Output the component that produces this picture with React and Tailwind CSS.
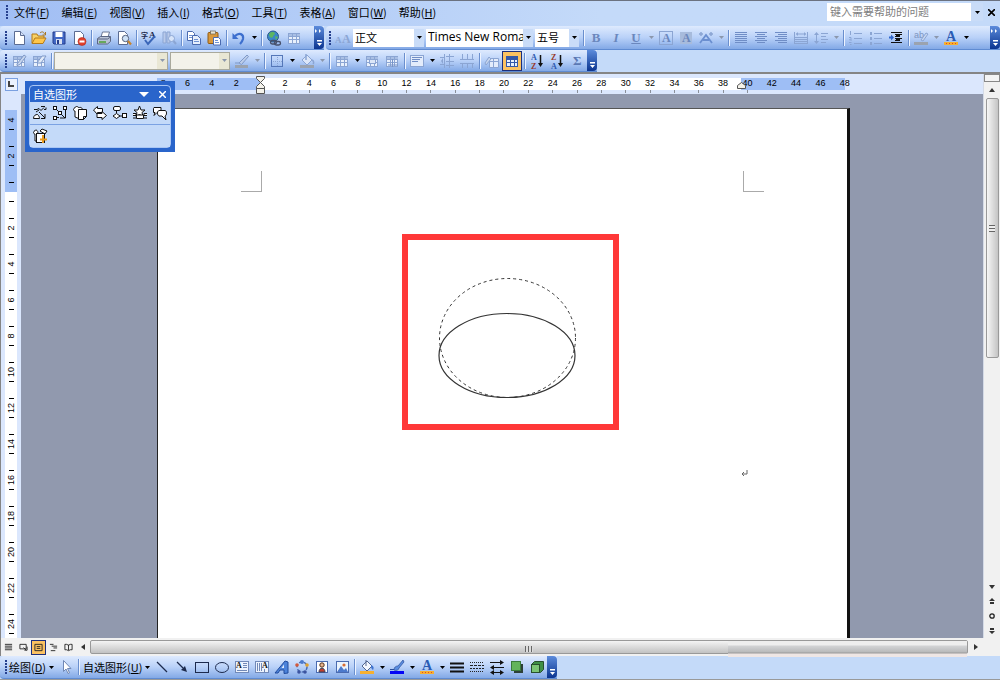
import clsx from "clsx";

const menus = [
  ["文件", "F"], ["编辑", "E"], ["视图", "V"], ["插入", "I"], ["格式", "O"],
  ["工具", "T"], ["表格", "A"], ["窗口", "W"], ["帮助", "H"],
];

const OFF = "#8ba5d3";
const INK = "#1c2a4d";

// small serif letter used inside icons
const Letter = ({ x, y, size = 11, fill = OFF, children }) => (
  <text x={x} y={y} fontSize={size} fontWeight="bold" fontFamily="Liberation Serif, serif" fill={fill}>{children}</text>
);

const lines = (list, stroke = OFF) => (
  <g stroke={stroke} shapeRendering="crispEdges">
    {list.map(([x1, x2, y], i) => <line key={i} x1={x1} x2={x2} y1={y + 0.5} y2={y + 0.5} />)}
  </g>
);

const grid = (stroke, head) => (
  <g shapeRendering="crispEdges">
    <rect x="2.5" y="3.5" width="11" height="10" fill="#e8f0fc" stroke={stroke} />
    <rect x="3" y="4" width="11" height="2" fill={head} />
    <path d="M3 6.5h11M3 9.5h11M6.5 4v10M10.5 4v10" stroke={stroke} />
  </g>
);

const icons = {
  new: <><path d="M3.5 1.5h6l4 4v9h-10z" fill="#fff" stroke="#5b6c93" /><path d="M9.5 1.5v4h4" fill="#d6e2f7" stroke="#5b6c93" /></>,
  open: <><path d="M1 13V4h5l1 2h6v2" fill="#f7d268" stroke="#b57b19" /><path d="M1 13.5L4 8h11l-3 5.5z" fill="#ffc64a" stroke="#b57b19" /><path d="M9 3c2-2 4-1 4.5 1M14.5 2v3h-3" fill="none" stroke="#a8761f" /></>,
  save: <><path d="M2 2h12v12H3l-1-1z" fill="#4268c5" stroke="#253d8b" /><rect x="4.5" y="2" width="7" height="5" fill="#fff" /><rect x="5" y="9" width="6" height="5" fill="#d7dff0" /><rect x="6" y="10" width="2" height="4" fill="#253d8b" /></>,
  perm: <><path d="M3.5 1.5h6l3 3v10h-9z" fill="#fff" stroke="#5b6c93" /><circle cx="11" cy="11.5" r="4" fill="#e2402c" stroke="#b32617" strokeWidth=".6" /><rect x="8.5" y="10.5" width="5" height="2" fill="#fff" /></>,
  print: <><path d="M5 7l1.5-5h7L12 7" fill="#fff" stroke="#6b7895" /><path d="M1.5 8.5l3-2h10v5l-3 2.5h-10z" fill="#b9c3d6" stroke="#5b6784" /><path d="M2 9h9.5l3-2" fill="none" stroke="#5b6784" /><rect x="3" y="11" width="7" height="2" fill="#67a85c" /></>,
  preview: <><path d="M2.5 1.5h6l3 3v10h-9z" fill="#fff" stroke="#5b6c93" /><circle cx="9.5" cy="8.5" r="3.2" fill="#cfe2f7" stroke="#56627e" /><path d="M12 11l3 3.5" stroke="#c8842b" strokeWidth="2.2" /></>,
  spell: <><text x="0" y="8" fontSize="7" fontWeight="bold" fontFamily="Noto Sans CJK SC, sans-serif" fill={INK}>字</text><Letter x={8} y={8} size={9} fill={INK}>A</Letter><path d="M4 10l3 4 7-8" fill="none" stroke="#3a66b8" strokeWidth="2" /></>,
  research: <><path d="M2 2h3v11H2zM6 2h3v11H6z" fill="#b9caea" stroke={OFF} /><circle cx="10.5" cy="8.5" r="3" fill="#d7e4f9" stroke={OFF} /><path d="M12.5 11l2.5 3" stroke={OFF} strokeWidth="2" /></>,
  copy: <><path d="M1.5 1.5h5l2 2v7h-7z" fill="#fff" stroke="#4a6bb0" /><path d="M6.5 5.5h5l3 3v6h-8z" fill="#e7effc" stroke="#4a6bb0" /><path d="M8 9.5h4M8 11.5h5M3 5.5h3M3 7.5h3" stroke="#6f92d3" /></>,
  paste: <><rect x="2" y="2.5" width="10" height="11" rx="1" fill="#d9983a" stroke="#905a12" /><rect x="4.5" y="1" width="5" height="3" fill="#e9e3d2" stroke="#6d6452" strokeWidth=".7" /><path d="M7.5 7.5h5l2 2v5.5h-7z" fill="#fff" stroke="#4a6bb0" /><path d="M9 10.5h3M9 12.5h4" stroke="#6f92d3" /></>,
  undo: <><path d="M4 6c4-4 9-2 8 3-.5 2-2 4-3 5" fill="none" stroke="#3d6fce" strokeWidth="2.2" /><path d="M1.5 3v6h6z" fill="#3d6fce" /></>,
  link: <><circle cx="7" cy="6.5" r="5.5" fill="#3a86c9" stroke="#2b5a8a" /><path d="M3 4c2-3 5-2 6-1 0 2-2 2-2 4-2 2-4 0-4-3zM9 6l3 1-2 3z" fill="#5cb562" /><g fill="none" stroke="#46506a" strokeWidth="1.4"><rect x="4.5" y="10.5" width="6" height="3.5" rx="1.7" /><rect x="8.5" y="11.5" width="6" height="3.5" rx="1.7" /></g></>,
  table: grid(OFF, "#a9bfe4"),
  tableOn: grid("#3558a8", "#3558a8"),
  styles: <><Letter x={0} y={13} size={9}>A</Letter><Letter x={7} y={13} size={12}>A</Letter></>,
  boxA: <><rect x="1.5" y="1.5" width="13" height="13" fill="none" stroke={OFF} /><Letter x={4} y={12} size={12} fill="#6b87bd">A</Letter></>,
  shadeA: <><rect x="2" y="2" width="12" height="12" fill="#a7bbdc" /><Letter x={4} y={12} size={12} fill="#6b87bd">A</Letter></>,
  scaleA: <><path d="M1 4h4M3 2v4M11 4h4M13 2v4" stroke={OFF} strokeWidth="1.5" /><path d="M2 13l6-8 6 8M5 10h6" fill="none" stroke="#6b8fd0" strokeWidth="1.8" /></>,
  justify: lines([[2, 14, 2], [2, 14, 4], [2, 14, 6], [2, 14, 8], [2, 14, 10], [2, 14, 12]], "#6f8dc6"),
  center: lines([[2, 14, 2], [4, 12, 4], [2, 14, 6], [4, 12, 8], [2, 14, 10], [4, 12, 12]], "#6f8dc6"),
  right: lines([[2, 14, 2], [5, 14, 4], [2, 14, 6], [5, 14, 8], [2, 14, 10], [5, 14, 12]], "#6f8dc6"),
  spread: <><path d="M1.5 2v12M14.5 2v12M3 4h10" stroke={OFF} /><path d="M3 4l2-2v4zM13 4l-2-2v4z" fill={OFF} />{lines([[2, 14, 7], [2, 14, 9], [2, 14, 11], [2, 14, 13]])}</>,
  spacing: <><path d="M3.5 3v10" stroke={OFF} /><path d="M1 5l2.5-3L6 5zM1 11l2.5 3L6 11z" fill={OFF} />{lines([[8, 15, 3], [8, 13, 6], [8, 15, 9], [8, 13, 12]])}</>,
  numbers: <>{lines([[6, 14, 3], [6, 14, 8], [6, 14, 13]])}<g stroke={OFF}><path d="M2.5 1v4M1 7.5h2v1L1.5 10H4M1 12.5h2.5M2 14.5h1.5" fill="none" /></g></>,
  bullets: <>{lines([[6, 14, 3], [6, 14, 8], [6, 14, 13]])}<path d="M2 2h2v3H2zM2 7h2v3H2zM2 12h2v3H2z" fill={OFF} /></>,
  indent: <>{lines([[3, 14, 2], [7, 14, 4], [7, 12, 6], [7, 14, 8], [7, 12, 10], [3, 14, 12]], "#111")}{lines([[8, 12, 5], [8, 12, 9]], "#111")}<path d="M1 7.5h3" stroke="#2f66cc" strokeWidth="2" /><path d="M3 4.5l3 3-3 3z" fill="#2f66cc" /></>,
  highlight: <><text x="1" y="8" fontSize="9" fontFamily="Liberation Sans, sans-serif" fill="#7d94bf">ab</text><path d="M8 10l5-7 2 1-5 7z" fill="#c7d6ee" stroke={OFF} /><rect x="1" y="12" width="14" height="3" fill="#9ba3af" /></>,
  fontColor: <><Letter x={3} y={11} size={14} fill="#2a5bb4">A</Letter><rect x="1" y="12" width="14" height="3" fill="#f6b030" /><path d="M3 13.5h10" stroke="#e2452b" strokeDasharray="1 2" /></>,
  draw: <>{grid(OFF, "#a9bfe4")}<path d="M6 11l7-9 2 1.5-6 8-3 1z" fill="#c6d5ee" stroke="#7f99c8" /></>,
  erase: <>{grid(OFF, "#a9bfe4")}<path d="M6 10l5-7h4l-5 7z" fill="#e2ebf9" stroke="#7f99c8" /></>,
  penOff: <><path d="M5 10l8-8 1.5 1.5-7 8z" fill="#bccde9" stroke="#7f99c8" /><path d="M1 10h4" stroke="#7f99c8" /><rect x="1" y="12" width="13" height="3" fill="#9ba3af" /></>,
  border: <g shapeRendering="crispEdges"><rect x="2.5" y="2.5" width="11" height="11" fill="none" stroke="#5577b8" /><path d="M8.5 4v9M4 8.5h9" stroke={OFF} strokeDasharray="1 1" /></g>,
  fillOff: <><path d="M3 7l5-5 5 5-5 5z" fill="#dbe6f8" stroke={OFF} /><path d="M7 7V1M13 7c2 1 2 3 1 4" fill="none" stroke={OFF} strokeWidth="1.5" /><rect x="1" y="12" width="14" height="3" fill="#9ba3af" /></>,
  merge: <>{grid(OFF, "#a9bfe4")}<rect x="5.5" y="6.5" width="6" height="4" fill="#dbe6f8" stroke={OFF} /></>,
  split: <>{grid(OFF, "#a9bfe4")}<path d="M8.5 6v8M4 12h10" stroke="#7894c8" /></>,
  align: <><rect x="1.5" y="2.5" width="13" height="11" fill="#e3ecfb" stroke={OFF} />{lines([[3, 13, 4], [3, 11, 6], [3, 9, 8]], "#6f8dc6")}</>,
  rows: <><path d="M5.5 1v14M10.5 1v14M1 4.5h4M1 11.5h4M7 3.5h8M7 8.5h8M7 12.5h8" stroke={OFF} shapeRendering="crispEdges" /><path d="M2 8l2-3v6z" fill={OFF} /></>,
  cols: <path d="M1 6.5h14M1 10.5h14M3.5 1v5M8.5 1v5M13.5 1v5M3.5 10v5M8.5 10v5M13.5 10v5" stroke={OFF} shapeRendering="crispEdges" />,
  autoformat: <><path d="M5.5 5.5h9v9h-9zM5.5 8.5h9M9.5 5v9" fill="#e3ecfb" stroke={OFF} /><path d="M1 10l4-6 2 2-5 6z" fill="#c6d5ee" stroke={OFF} /></>,
  sortAZ: <><Letter x={2} y={7} size={8} fill="#2e57ae">A</Letter><Letter x={2} y={16} size={8} fill="#983a2b">Z</Letter><path d="M11.5 2v9" stroke="#111" strokeWidth="1.5" /><path d="M9 10h5l-2.5 4z" fill="#111" /></>,
  sortZA: <><Letter x={2} y={7} size={8} fill="#983a2b">Z</Letter><Letter x={2} y={16} size={8} fill="#2e57ae">A</Letter><path d="M11.5 2v9" stroke="#111" strokeWidth="1.5" /><path d="M9 10h5l-2.5 4z" fill="#111" /></>,
  sum: <Letter x={4} y={12} size={13} fill="#5b78b4">Σ</Letter>,
  pointer: <path d="M5.5 1.5v11l2.5-2.5 2 4.5 1.5-.7-2-4.3h3.5z" fill="#fff" stroke="#7088b5" />,
  line: <path d="M3 3l10 10" stroke={INK} strokeWidth="1.2" />,
  arrow: <><path d="M3 3l6 6" stroke={INK} strokeWidth="1.2" /><path d="M13 13l-2-6-4 4z" fill={INK} /></>,
  rect: <rect x="1.5" y="3.5" width="13" height="10" fill="none" stroke={INK} />,
  oval: <ellipse cx="8" cy="8.5" rx="6.500" ry="5" fill="none" stroke={INK} />,
  textBox: <><rect x="1.5" y="2.5" width="13" height="11" fill="#edf3fd" stroke="#7189b8" /><Letter x={2} y={9} size={8} fill="#111">A</Letter>{lines([[9, 13, 4], [9, 13, 6], [9, 13, 8], [3, 13, 11]], "#7189b8")}</>,
  vTextBox: <><rect x="1.5" y="2.5" width="13" height="11" fill="#edf3fd" stroke="#7189b8" /><Letter x={8} y={9} size={8} fill="#111">A</Letter><path d="M3.5 4v8M5.5 4v8M7.5 4v8M10.5 10v3" stroke="#7189b8" /></>,
  wordArt: <><path d="M1 14L11 2l3 1v11l-4 .5V11H6l-2 3z" fill="#4c83da" stroke="#214b9c" /><path d="M7.5 9L10 5.5V9z" fill="#dfeafb" /></>,
  diagram: <><circle cx="8" cy="8" r="5" fill="none" stroke="#4a6bb0" strokeWidth="1.5" strokeDasharray="3 2" /><circle cx="8" cy="3" r="2" fill="#4b79cc" /><circle cx="3" cy="6" r="1.8" fill="#d25a3b" /><circle cx="13" cy="6" r="1.8" fill="#e0a12e" /><circle cx="5" cy="13" r="1.8" fill="#3b54a0" /><circle cx="11" cy="13" r="1.8" fill="#3b54a0" /></>,
  clipArt: <><rect x="2.5" y="2.5" width="11" height="11" fill="#fff" stroke="#4a6bb0" /><circle cx="8" cy="6" r="2.2" fill="#e8b48e" stroke="#53331c" /><path d="M5 13c0-5 6-5 6 0z" fill="#c23e2c" stroke="#38425c" /></>,
  picture: <><rect x="2.5" y="2.5" width="12" height="11" fill="#eaf3fd" stroke="#4a6bb0" /><path d="M3 13l4-6 3 4 2-2 2 4z" fill="#4b79cc" /><circle cx="10" cy="6" r="1.6" fill="#d96c33" /></>,
  fill: <><path d="M3 7l5-5 5 5-5 5z" fill="#f4f8ff" stroke="#54678f" /><path d="M7 7V1" stroke="#54678f" /><path d="M12 6c3 1 3 3 2 5-2-1-2-3-2-5z" fill="#3f74d1" /><rect x="1" y="12" width="14" height="3" fill="#f6b030" /></>,
  pen: <><path d="M5 11c0-3 2-4 4-4l5-6 1 2-5 6c0 2-3 3-5 2z" fill="#5a8de0" stroke="#2b4f99" strokeWidth=".7" /><path d="M1 10.5h4" stroke="#2b4f99" /><rect x="1" y="12" width="14" height="3" fill="#0505f5" /></>,
  weight: <path d="M1 4.5h14M1 8.5h14M1 12.5h14" stroke="#111" strokeWidth="2" />,
  dash: <g stroke="#222" shapeRendering="crispEdges"><path d="M1 3.5h14M1 12.5h14" strokeDasharray="1 1" /><path d="M1 6.5h14" strokeDasharray="3 1" /><path d="M1 9.5h14" strokeDasharray="2 1" /></g>,
  arrows: <><path d="M1 3.5h11M4 8.5h11M3 13.5h10" stroke="#111" /><path d="M11 1l4 2.5L11 6zM5 6L1 8.5 5 11zM11 11l4 2.5-4 2.5zM5 11l-4 2.5L5 16z" fill="#111" /></>,
  shadow: <><rect x="5" y="5" width="9" height="9" fill="#2d4038" /><rect x="2.5" y="2.5" width="9" height="9" fill="#63b45b" stroke="#3b7b3c" /></>,
  cube: <><path d="M2.5 5.5l3-3h9v8l-3 3z" fill="#3f8f45" stroke="#28502d" /><rect x="2.5" y="5.5" width="8" height="8" fill="#7cc474" stroke="#28502d" /></>,
  shapeLines: <g fill="none" stroke="#111"><path d="M2 4.5h3l2-1 2 2 3-3M9 1.5h4M12 4.5h2v-2M4 7l3-2M7 7l6 6M13 9v4.5H9" /><path d="M1.5 13.5c0-3 2-4 4-4 1 1 2 2 2 4z" fill="#fff" /></g>,
  connectors: <g fill="#fff" stroke="#111"><path d="M3 3l10 10M13.5 4v9H8M5 12.500h2" fill="none" /><rect x="1.5" y="1.5" width="3" height="3" /><rect x="11.5" y="1.5" width="3" height="3" /><rect x="1.5" y="11.5" width="3" height="3" /><rect x="6.5" y="6.5" width="3" height="3" /></g>,
  basic: <g fill="#fff" stroke="#111"><path d="M3 3c-2 0-2 3 0 3v6l5 2 2-9c1-3-3-3-3-2-1-2-4-2-4 0z" /><path d="M6.5 4.5h8v7l-3 3h-5zM14.5 11.5h-3v3" /></g>,
  blockArrows: <g fill="#fff" stroke="#111"><path d="M1.5 5l4-3.5v2h5v4h-5v2z" /><path d="M14.5 10.5L10 14.5v-2H5v-4h5v-2z" /></g>,
  flow: <g fill="#fff" stroke="#111"><path d="M4.5 5v3M7 11h3" /><rect x="1.5" y="1.5" width="7" height="4" rx="1.5" /><path d="M1 11l3.5-2.5L8 11l-3.5 2.5z" /><rect x="10.5" y="8.5" width="4" height="4" /></g>,
  stars: <g fill="#fff" stroke="#111"><path d="M7.5 1l1.5 4h4L10 7.5l1 4-3.5-2-3.5 2 1-4L2 5h4z" /><path d="M1 10.5h3v-2H1M15 10.5h-3v-2h3M4.5 10h7v3.5h-7zM1 13h3M12 13h3" /></g>,
  callouts: <g fill="#fff" stroke="#111"><path d="M2 2.5h7v5H5l-3 3 1-3H1.5v-4z" /><path d="M7 5.5h6c2 0 2 5 0 5.5l1 4-4-4H7c-2-1-2-5 0-5.5z" /></g>,
  moreShapes: <><g fill="#fff" stroke="#111"><path d="M3 3c-2 0-2 3 0 3v7h3V5c0-3-3-4-3-2zM8 3l2-2 5 2-2 3z" /><rect x="4.5" y="5.5" width="8" height="9" /></g><path d="M11 7v8M8 11.5h7" stroke="#e89a1d" strokeWidth="2" /></>,
};

const Icon = ({ name }) => (
  <svg viewBox="0 0 16 16" className="w-4 h-4 shrink-0" aria-hidden="true">{icons[name]}</svg>
);

const Tool = ({ name, active, children }) => (
  <button
    aria-label={name}
    className={clsx("w-5 h-5 shrink-0 flex items-center justify-center", active && "bg-[#fcc261] border border-[#1d2f7c]")}
  >
    {children || <Icon name={name} />}
  </button>
);

const Caret = ({ off }) => (
  <span className="w-[10px] shrink-0 flex justify-center">
    <svg viewBox="0 0 5 3" className={clsx("w-[5px] h-[3px]", off ? "text-[#8b97ac]" : "text-black")}>
      <path d="M0 0h5L2.5 3z" fill="currentColor" />
    </svg>
  </span>
);

const Sep = () => (
  <span className="w-[5px] shrink-0 flex justify-center">
    <span className="w-px h-4 bg-[#6a8fce] shadow-[1px_0_0_#eef4ff]" />
  </span>
);

const Grip = () => (
  <span className="w-[7px] shrink-0 flex flex-col items-center gap-px">
    {[0, 1, 2, 3, 4].map((i) => <span key={i} className="w-[2px] h-[2px] bg-[#27418f]" />)}
  </span>
);

const Cap = ({ more }) => (
  <button
    aria-label="工具栏选项"
    className="w-[10px] shrink-0 self-stretch flex flex-col items-center justify-between py-[3px] rounded-r-sm bg-linear-to-b from-[#5c8bdb] to-[#0b3490]"
  >
    <svg viewBox="0 0 8 4" className="w-2 h-1">{more && <path d="M0 0l2 2-2 2zM4 0l2 2-2 2z" fill="#fff" />}</svg>
    <svg viewBox="0 0 7 6" className="w-[7px] h-[6px]"><path d="M1 0h5v1.5H1zM1 3h5L3.5 6z" fill="#fff" /></svg>
  </button>
);

const Combo = ({ label, value, width, off }) => (
  <label className={clsx("flex items-center shrink-0 h-[18px] mr-[2px]", width, off ? "bg-[#f3f2ea] border border-[#a9a99c]" : "bg-white")}>
    <select
      aria-label={label}
      disabled={off}
      defaultValue={value}
      className="flex-1 min-w-0 h-full appearance-none bg-transparent pl-[2px] pb-[2px] outline-none overflow-hidden"
    >
      <option>{value}</option>
    </select>
    <span className={clsx("self-stretch flex items-center", off ? "bg-[#e9e7d4]" : "bg-[#c9dcf8]")}><Caret off={off} /></span>
  </label>
);

const bar = "flex items-center bg-linear-to-b from-[#deeafe] via-[#b9d1f8] to-[#83a9e6] border-b border-[#5f8bd2] rounded-l-sm";

// plain string = icon, "v" / "V" = caret (disabled / enabled), "|" = separator
const Tools = ({ items }) =>
  items.map((it, i) => {
    if (it === "|") return <Sep key={i} />;
    if (it === "v" || it === "V") return <Caret key={i} off={it === "v"} />;
    return <Tool key={i} name={it} active={it === "tableOn"} />;
  });

function MenuBar() {
  return (
    <header className="h-[26px] shrink-0 flex items-center border-t border-[#6b7280] pb-[3px] bg-linear-to-r from-[#a1bef4] to-[#c4daf9] to-60%">
      <span className="w-[3px]" />
      <Grip />
      <nav className="flex gap-3 pl-1">
        {menus.map(([name, key]) => (
          <button key={key} className="whitespace-nowrap">{name}(<u>{key}</u>)</button>
        ))}
      </nav>
      <label className="ml-auto w-[156px] h-[18px] flex bg-white">
        <input aria-label="帮助" placeholder="键入需要帮助的问题" className="flex-1 min-w-0 pl-[3px] pb-[2px] outline-none placeholder:text-[#808080]" />
        <span className="w-3 flex items-center justify-center bg-[#c9dcf8]"><Caret /></span>
      </label>
      <button aria-label="关闭" className="w-[17px] flex justify-center">
        <svg viewBox="0 0 7 7" className="w-[7px] h-[7px]"><path d="M0 0l7 7M7 0L0 7" stroke="#000" strokeWidth="1.6" /></svg>
      </button>
    </header>
  );
}

function StandardRow() {
  return (
    <div className="h-6 shrink-0 flex">
      <div className={clsx(bar, "w-[324px] shrink-0")}>
        <span className="w-[2px]" />
        <Grip />
        <Tools items={["new", "open", "save", "perm", "|", "print", "preview", "|", "spell", "research", "|", "copy", "paste", "|", "undo", "V", "|", "link", "table"]} />
        <span className="flex-1" />
        <Cap more />
      </div>
      <div className={clsx(bar, "flex-1 min-w-0 ml-[2px]")}>
        <Grip />
        <Tools items={["styles"]} />
        <Combo label="样式" value="正文" width="w-[71px]" />
        <Combo label="字体" value="Times New Roman" width="w-[107px] text-[12px] font-[Open_Sans,sans-serif]" />
        <Combo label="字号" value="五号" width="w-[44px]" />
        <Sep />
        <div className="flex font-[Liberation_Serif,serif] text-[13px] font-bold text-[#6b87bd]">
          <Tool name="加粗">B</Tool>
          <Tool name="倾斜"><i>I</i></Tool>
          <Tool name="下划线"><u>U</u></Tool>
        </div>
        <Tools items={["v", "boxA", "shadeA", "scaleA", "v", "|", "justify", "center", "right", "spread", "spacing", "v", "|", "numbers", "bullets", "indent", "|", "highlight", "v", "fontColor", "V"]} />
        <span className="flex-1" />
        <Cap more />
      </div>
    </div>
  );
}

function TableRow() {
  return (
    <div className="h-[22px] shrink-0 flex">
      <div className={bar}>
        <span className="w-[2px]" />
        <Grip />
        <Tools items={["draw", "erase", "|"]} />
        <Combo label="线型" value="" width="w-[114px]" off />
        <Combo label="粗细" value="" width="w-[60px]" off />
        <Tools items={["penOff", "v", "|", "border", "V", "fillOff", "v", "|", "table", "V", "merge", "split", "|", "align", "V", "rows", "cols", "|", "autoformat", "tableOn", "|", "sortAZ", "sortZA", "sum"]} />
        <Cap />
      </div>
    </div>
  );
}

const hMarks = [8, 6, 4, 2, 0, ...Array.from({ length: 24 }, (_, i) => (i + 1) * 2)];
const vMarks = [4, 2, 0, ...Array.from({ length: 12 }, (_, i) => (i + 1) * 2)];

function HRuler() {
  return (
    <div className="h-5 shrink-0 flex bg-[#dbe7fd]">
      <div className="w-5 shrink-0 flex items-center justify-center">
        <span className="w-[13px] h-[13px] flex items-center justify-center border border-[#7aa0e0] bg-[#eaf1fe]">
          <span className="w-[6px] h-[6px] border-l-2 border-b-2 border-[#444]" />
        </span>
      </div>
      <div className="flex-1 flex justify-center pl-1 pt-1">
        <div className="relative w-[706px] h-3 grid grid-cols-[repeat(29,minmax(0,1fr))] bg-[linear-gradient(90deg,transparent_6px,#9ebef5_6px_109px,#fff_109px_590px,#9ebef5_590px_694px,transparent_694px)]">
          {hMarks.map((n, i) => (
            <div key={i} className="flex flex-col items-center text-[9px] leading-[11px] text-black font-[Liberation_Sans,sans-serif]">
              <span className="h-3">{n || ""}</span>
              {i > 4 && i < 25 && <span className="w-px h-[3px] shrink-0 bg-[#8a8f99]" />}
            </div>
          ))}
          {/* indent markers */}
          <svg viewBox="0 0 9 18" className="absolute left-[105px] -top-[2px] w-[9px] h-[18px]">
            <path d="M.5.5h8v2l-4 4-4-4zM4.5 6.5l4 4v2h-8v-2zM.5 12.5h8v5h-8z" fill="#f4f2ea" stroke="#555" />
          </svg>
          <svg viewBox="0 0 9 7" className="absolute left-[586px] top-[4px] w-[9px] h-[7px]">
            <path d="M4.5.5l4 3v3h-8v-3z" fill="#f4f2ea" stroke="#555" />
          </svg>
        </div>
      </div>
    </div>
  );
}

function VRuler() {
  return (
    <div className="w-5 shrink-0 overflow-hidden bg-[#dbe7fd] pt-2 pl-1">
      <div className="w-3 bg-[linear-gradient(180deg,transparent_8px,#9ebef5_8px_90px,#fff_90px)]">
        {vMarks.map((n, i) => (
          <div key={i} className="h-9 flex flex-col items-center justify-between py-2 text-[9px] leading-3 font-[Liberation_Sans,sans-serif]">
            <span className={clsx("w-[5px] h-px", i > 0 && "bg-black")} />
            <span className="h-3 -rotate-90">{n || ""}</span>
            <span className="w-[5px] h-px bg-black" />
          </div>
        ))}
      </div>
    </div>
  );
}

function ShapesPanel() {
  return (
    <section className="absolute left-[24px] top-[7px] z-10 w-[150px] bg-[#2a65cb] p-1">
      <div className="border border-[#a9c6f5] rounded-sm">
        <div className="h-4 flex items-center pl-[3px] pr-1 text-white">
          <h2 className="flex-1">自选图形</h2>
          <button aria-label="选项" className="w-5"><svg viewBox="0 0 10 5" className="w-[10px] h-[5px]"><path d="M0 0h10L5 5z" fill="#fff" /></svg></button>
          <button aria-label="关闭"><svg viewBox="0 0 7 7" className="w-[7px] h-[7px]"><path d="M0 0l7 7M7 0L0 7" stroke="#fff" strokeWidth="1.5" /></svg></button>
        </div>
        <div className="h-[23px] flex items-center bg-[#c4daf9] border-b border-[#7ba2e3]">
          <Tools items={["shapeLines", "connectors", "basic", "blockArrows", "flow", "stars", "callouts"]} />
        </div>
        <div className="h-[22px] flex items-center bg-[#c4daf9]"><Tools items={["moreShapes"]} /></div>
      </div>
    </section>
  );
}

function Page() {
  return (
    <div className="relative w-[693px] shrink-0 bg-white border-t border-l border-r-3 border-t-[#555] border-l-[#222] border-r-[#111]">
      <span className="absolute left-[83px] top-[62px] w-[21px] h-[21px] border-r border-b border-[#aaa]" />
      <span className="absolute left-[585px] top-[62px] w-[21px] h-[21px] border-l border-b border-[#aaa]" />
      <div className="absolute left-[244px] top-[125px] w-[217px] h-[196px] border-6 border-[#ff3838]">
        <svg viewBox="0 0 205 184" className="w-full h-full" fill="none" stroke="#333">
          <ellipse cx="99.5" cy="98" rx="68" ry="59.5" strokeDasharray="3 3" />
          <ellipse cx="99" cy="115.5" rx="68" ry="42" strokeWidth="1.2" />
        </svg>
      </div>
      <svg viewBox="0 0 7 7" className="absolute left-[583px] top-[361px] w-[7px] h-[7px]" fill="none" stroke="#666">
        <path d="M6 0v4H1M3 2L1 4l2 2" />
      </svg>
    </div>
  );
}

const Arrow = ({ d }) => (
  <svg viewBox="0 0 6 6" className="w-[6px] h-[6px]"><path d={d} fill="#333" /></svg>
);

function VScroll() {
  return (
    <div className="w-[17px] shrink-0 flex flex-col items-center bg-[#f1f1f1] border-l border-[#d4dae6]">
      <span className="w-full h-2 shrink-0 bg-[#f4f4f4] border border-[#888]" />
      <button aria-label="向上" className="h-4 shrink-0 flex items-center"><Arrow d="M0 5l3-4 3 4z" /></button>
      <div className="flex-1 w-full flex flex-col items-center">
        <div className="w-[13px] basis-[54%] flex items-center justify-center rounded-xs border border-[#999] bg-linear-to-r from-[#f6f6f6] to-[#c4c4c4]">
          <span className="w-[6px] h-[7px] bg-[repeating-linear-gradient(180deg,#666_0_1px,#eee_1px_3px)]" />
        </div>
      </div>
      <button aria-label="向下" className="h-[13px] shrink-0 flex items-center"><Arrow d="M0 1h6L3 5z" /></button>
      <button aria-label="前一页" className="h-[15px] shrink-0 flex items-center"><Arrow d="M0 3l3-3 3 3zM1 4h4v2H1z" /></button>
      <button aria-label="选择浏览对象" className="h-[15px] shrink-0 flex items-center">
        <svg viewBox="0 0 6 6" className="w-[6px] h-[6px]"><circle cx="3" cy="3" r="2.2" fill="none" stroke="#222" strokeWidth="1.3" /></svg>
      </button>
      <button aria-label="下一页" className="h-[15px] shrink-0 flex items-center"><Arrow d="M1 0h4v2H1zM0 3h6L3 6z" /></button>
    </div>
  );
}

const views = [
  ["普通视图", "M1 1.5h8M1 3.5h8M1 5.5h8M1 7.5h8"],
  ["Web 版式", "M1 1.5h7v5H1zM5 5l3 3M6 8h3V4"],
  ["页面视图", "M1 1.5h8v7H1zM3 4h4M3 6h4"],
  ["大纲视图", "M1 1.5h4M3 3.5h6M5 5.5h4M2 8.5h5"],
  ["阅读版式", "M1 1.5h2l2 1 2-1h2v6H7l-2 1-2-1H1zM5 2v6"],
];

function BottomScroll() {
  return (
    <div className="h-[18px] shrink-0 flex items-center bg-[#f1f1f1]">
      {views.map(([name, d]) => (
        <button
          key={name}
          aria-label={name}
          className={clsx("w-[15px] h-[15px] shrink-0 flex items-center justify-center", name === "页面视图" && "bg-[#fcc261] border border-[#1d2f7c]")}
        >
          <svg viewBox="0 0 10 10" className="w-[9px] h-[9px]"><path d={d} fill="none" stroke="#222" /></svg>
        </button>
      ))}
      <button aria-label="向左" className="w-[14px] shrink-0 flex justify-center"><Arrow d="M5 0v6L1 3z" /></button>
      <div className="flex-1 h-[14px] grid grid-cols-[1fr_auto_1fr] items-center rounded-xs border border-[#999] bg-linear-to-b from-[#f4f4f4] to-[#c2c2c2]">
        <span className="col-start-2 w-[8px] h-[6px] bg-[repeating-linear-gradient(90deg,#666_0_1px,#ddd_1px_3px)]" />
        <span className="justify-self-end w-[55%] h-4 bg-[linear-gradient(180deg,#eee_0_4px,#d2d3d5_5px,#b9babb_11px,#999_12px,#eee6e5_13px)]" />
      </div>
      <button aria-label="向右" className="w-4 shrink-0 flex justify-center"><Arrow d="M1 0v6l4-3z" /></button>
      <span className="w-4 shrink-0" />
    </div>
  );
}

function DrawingBar() {
  return (
    <footer className="h-6 shrink-0 flex border-b border-[#999]">
      <div className={bar}>
        <span className="w-[2px]" />
        <Grip />
        <button className="flex items-center whitespace-nowrap">绘图(<u>D</u>)<Caret /></button>
        <Tools items={["pointer", "|"]} />
        <button className="flex items-center whitespace-nowrap pl-[2px]">自选图形(<u>U</u>)<Caret /></button>
        <Tools items={["line", "arrow", "rect", "oval", "textBox", "vTextBox", "wordArt", "diagram", "clipArt", "picture", "|", "fill", "V", "pen", "V", "fontColor", "V", "weight", "dash", "arrows", "shadow", "cube"]} />
        <Cap />
      </div>
    </footer>
  );
}

export default function App() {
  return (
    <div className="h-screen flex flex-col overflow-hidden bg-[#c4daf9] text-[11px] leading-4 text-black font-[Noto_Sans_CJK_SC,sans-serif]">
      <MenuBar />
      <StandardRow />
      <TableRow />
      <main className="relative flex-1 min-h-0 flex flex-col border-t-2 border-l border-[#858585]">
        <div className="flex-1 min-h-0 flex">
          <div className="flex-1 min-w-0 flex flex-col">
            <HRuler />
            <div className="flex-1 min-h-0 flex">
              <VRuler />
              <div className="flex-1 min-w-0 flex justify-center overflow-hidden bg-[#9199ae] pt-[14px] pl-[2px]">
                <Page />
              </div>
            </div>
          </div>
          <VScroll />
        </div>
        <BottomScroll />
        <ShapesPanel />
      </main>
      <DrawingBar />
    </div>
  );
}
